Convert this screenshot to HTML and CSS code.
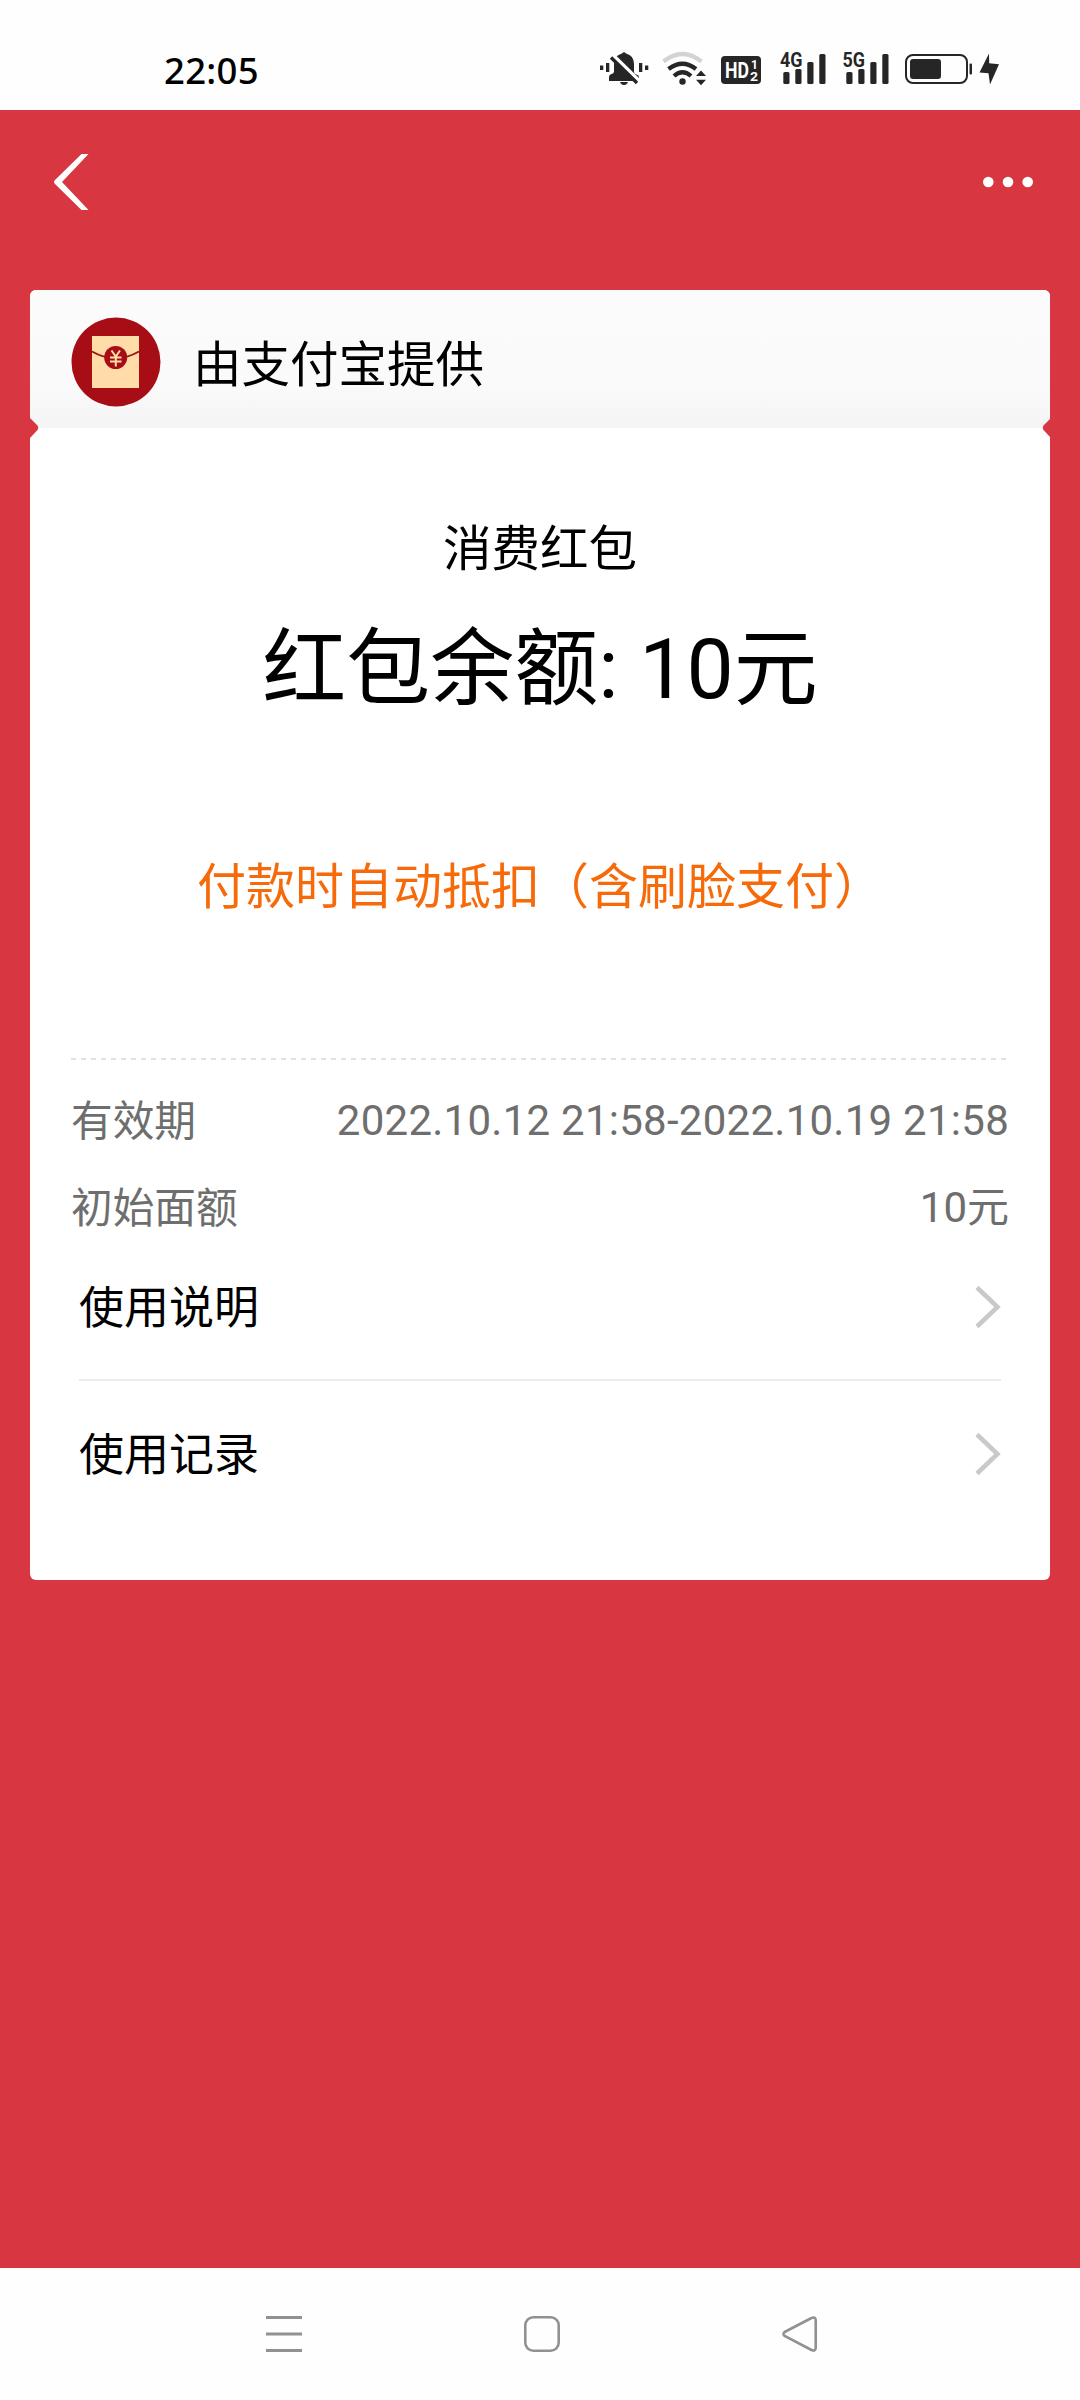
FILE: index.html
```html
<!DOCTYPE html>
<html lang="zh-CN">
<head>
<meta charset="utf-8">
<title>消费红包</title>
<link rel="stylesheet" href="styles.css">
</head>
<body>
<div class="screen">
  <header class="status">
    <span class="time">22:05</span>
    <svg class="status-icons" viewBox="596 46 408 46" width="408" height="46" fill="#262626">
      <!-- muted bell -->
      <path d="M600 65.5h3.300v4.500h-3.300zM606 63h3.300v9h-3.300zM639 63h3.300v9h-3.300zM645 65.500h3.300v4.500h-3.300zM620 82h8q-1 3-4 3t-4-3z"/>
      <path d="M622 53.500q2-2.500 4 0q8 2 8 10.500v8q0 2 2.500 2.500t2.500 3v3.500h-30v-3.500q0-3 2.500-3.500t2.500-2.500v-8q0-8 8-10z"/>
      <path d="M613.500 55.500L639.500 81" stroke="#fff" stroke-width="3.500"/>
      <path d="M611 57.500L637 83" stroke="#262626" stroke-width="3.300"/>
      <!-- wifi -->
      <g fill="none" stroke="#262626" stroke-width="4.200">
        <path d="M663.500 61.500Q682.500 46.500 701.500 61.500" stroke="#d3d3d3"/>
        <path d="M668.500 69Q682.500 58.500 696 69"/>
        <path d="M674 76Q682.500 68.500 691 76"/>
      </g>
      <circle cx="682.500" cy="81.500" r="3.200"/>
      <path d="M696 76l5-5.500 5 5.500zM696 79.800h10l-5 5.500z"/>
      <!-- HD badge -->
      <rect x="721" y="56" width="40" height="28" rx="4"/>
      <g fill="#fff" font-family="Roboto, sans-serif" font-weight="700">
        <text x="725" y="78" font-size="22" textLength="24" lengthAdjust="spacingAndGlyphs">HD</text>
        <text x="751" y="68.500" font-size="12">1</text>
        <text x="750" y="81" font-size="12" textLength="8" lengthAdjust="spacingAndGlyphs">2</text>
      </g>
      <!-- signal bars -->
      <g font-family="Roboto, sans-serif" font-weight="700" font-size="19.500">
        <text x="780" y="67" textLength="22.500" lengthAdjust="spacingAndGlyphs">4G</text>
        <text x="842.500" y="67" textLength="22.500" lengthAdjust="spacingAndGlyphs">5G</text>
      </g>
      <g id="bars">
        <rect x="783.300" y="72" width="6.200" height="12" rx="1.500"/>
        <rect x="795.300" y="69" width="6.200" height="15" rx="1.500"/>
        <rect x="807.300" y="62" width="6.200" height="22" rx="1.500"/>
        <rect x="819.300" y="54" width="6.200" height="30" rx="1.500"/>
      </g>
      <use href="#bars" x="63"/>
      <!-- battery -->
      <rect x="906" y="55" width="61" height="28" rx="7" fill="none" stroke="#262626" stroke-width="2"/>
      <rect x="910" y="59" width="31" height="20" rx="3"/>
      <rect x="969.500" y="63.500" width="2.500" height="11" rx="1"/>
      <path d="M989 53.500L979.500 72.500L988.500 73.200L990 84.500L999 64.200L989.200 63.200z"/>
    </svg>
  </header>

  <main class="page">
    <nav class="topbar">
      <svg width="36" height="60" viewBox="0 0 36 60" fill="#fff"><path d="M28.500 2H35.500L9 30L35.500 58H28.500L2 32Q0 30 2 28z"/></svg>
      <svg width="52" height="12" viewBox="0 0 52 12" fill="#fff"><circle cx="6.300" cy="6" r="5.300"/><circle cx="26" cy="6" r="5.300"/><circle cx="45.700" cy="6" r="5.300"/></svg>
    </nav>

    <section class="card">
      <svg class="notch notch-left" width="9" height="20" viewBox="0 0 9 20"><path d="M0 0L7.500 7.500Q9 10 7.500 12L0 20z"/></svg>
      <svg class="notch notch-right" width="9" height="20" viewBox="0 0 9 20"><path d="M9 0L1.500 7.500Q0 10 1.500 12L9 20z"/></svg>
      <div class="provider">
        <svg class="logo" width="90" height="90" viewBox="0 0 90 90">
          <circle cx="45" cy="45" r="44.500" fill="#a60d14"/>
          <rect x="21" y="19" width="47" height="52" fill="#ffdca8"/>
          <path d="M21 34.500Q44.500 48 68 34.500" fill="none" stroke="#a60d14" stroke-width="2"/>
          <circle cx="44.700" cy="40.500" r="11.500" fill="#a60d14"/>
          <path d="M40.500 33.500L44.800 39.500L49 33.500M39 40.500H50.500M39 44.500H50.500M44.800 39.500V49.500" fill="none" stroke="#ffdca8" stroke-width="2"/>
        </svg>
        <span class="provider-name">由支付宝提供</span>
      </div>
      <div class="body">
        <div class="kind">消费红包</div>
        <div class="balance">红包余额: 10元</div>
        <div class="tip">付款时自动抵扣（含刷脸支付）</div>
        <div class="dashes"></div>
        <dl class="info">
          <div class="info-row"><dt>有效期</dt><dd class="period">2022.10.12 21:58-2022.10.19 21:58</dd></div>
          <div class="info-row"><dt>初始面额</dt><dd>10元</dd></div>
        </dl>
        <div class="links">
          <a class="link first"><span>使用说明</span><svg class="arrow" width="26" height="44" viewBox="0 0 26 44"><path d="M2 2.500L22.500 22L2 41.500"/></svg></a>
          <a class="link"><span>使用记录</span><svg class="arrow" width="26" height="44" viewBox="0 0 26 44"><path d="M2 2.500L22.500 22L2 41.500"/></svg></a>
        </div>
      </div>
    </section>
  </main>

  <footer class="navbar">
    <svg width="36" height="38" viewBox="0 0 36 38"><path d="M0 2.500H36M0 19H36M0 35.500H36" stroke-width="3"/></svg>
    <svg width="36" height="38" viewBox="0 0 36 38"><rect x="1.300" y="2.300" width="33.400" height="33.400" rx="8"/></svg>
    <svg width="36" height="38" viewBox="0 0 36 38"><path d="M2.600 17L29.500 3Q33.500 1.500 33.700 5V33Q33.500 36.500 29.500 35L2.600 21Q.300 19 2.600 17z"/></svg>
  </footer>
</div>
</body>
</html>
```
FILE: styles.css
```css
* { box-sizing: border-box; }
body {
  margin: 0;
  font-family: Roboto, "Noto Sans CJK SC", sans-serif;
  color: #000;
}
svg { display: block; flex: none; }
.screen {
  width: 1080px;
  height: 2400px;
  display: flex;
  flex-direction: column;
  background: #fefefe;
}
.status {
  height: 110px;
  padding: 0 76px 0 164px;
  display: flex;
  align-items: center;
  justify-content: space-between;
}
.time {
  font: 500 36.500px/50px "Noto Sans", sans-serif;
  letter-spacing: 0.3px;
  padding-top: 30px;
}
.status-icons { margin-top: 28px; }
.page {
  flex: 1;
  background: #d83640;
  padding: 0 30px;
}
.topbar {
  height: 180px;
  padding: 42px 16px 78px 23px;
  display: flex;
  align-items: center;
  justify-content: space-between;
}
.card {
  position: relative;
  height: 1290px;
  border-radius: 6px;
  background: #fff;
}
.notch { position: absolute; top: 128px; fill: #d83640; }
.notch-left { left: -0.5px; }
.notch-right { right: -1px; }
.provider {
  height: 138px;
  padding: 6px 0 0 41px;
  display: flex;
  align-items: center;
  gap: 32px;
  border-radius: 6px 6px 0 0;
  background: linear-gradient(#fbfbfb 0%, #fafafa 70%, #f4f4f4 100%);
}
.provider-name { font-size: 48.500px; line-height: 60px; margin-top: 8px; }
.body { padding: 92px 41px 0; }
.kind { font-size: 48.500px; line-height: 60px; text-align: center; }
.balance { margin-top: 40px; font-size: 84px; line-height: 100px; text-align: center; }
.tip {
  margin-top: 138px;
  font-size: 49px;
  line-height: 60px;
  text-align: center;
  white-space: nowrap;
  color: #f66a0a;
}
.dashes {
  height: 2px;
  margin-top: 140px;
  background: repeating-linear-gradient(90deg, #e2e2e2 0 5px, transparent 5px 10px);
}
.info { margin: 0; padding-top: 17px; font-size: 42px; color: #6e6e6e; }
.info-row {
  height: 87.500px;
  display: flex;
  align-items: center;
  justify-content: space-between;
}
.info-row dt, .info-row dd { margin: 0; line-height: 60px; white-space: nowrap; }
.info-row dt { padding-top: 2px; font-size: 41.700px; }
.info-row .period { letter-spacing: 0.260px; }
.links { padding: 0 8px; }
.link {
  height: 146px;
  display: flex;
  align-items: center;
  justify-content: space-between;
  font-size: 45px;
  line-height: 60px;
}
.link span { padding-top: 3px; }
.link.first { height: 129px; padding-bottom: 17px; border-bottom: 2px solid #ebebeb; }
.arrow { fill: none; stroke: #c9c9c9; stroke-width: 4.500; }
.navbar {
  height: 132px;
  padding: 0 262px 0 266px;
  display: flex;
  align-items: center;
  justify-content: space-between;
}
.navbar svg { fill: none; stroke: #919191; stroke-width: 2.600; }
```
